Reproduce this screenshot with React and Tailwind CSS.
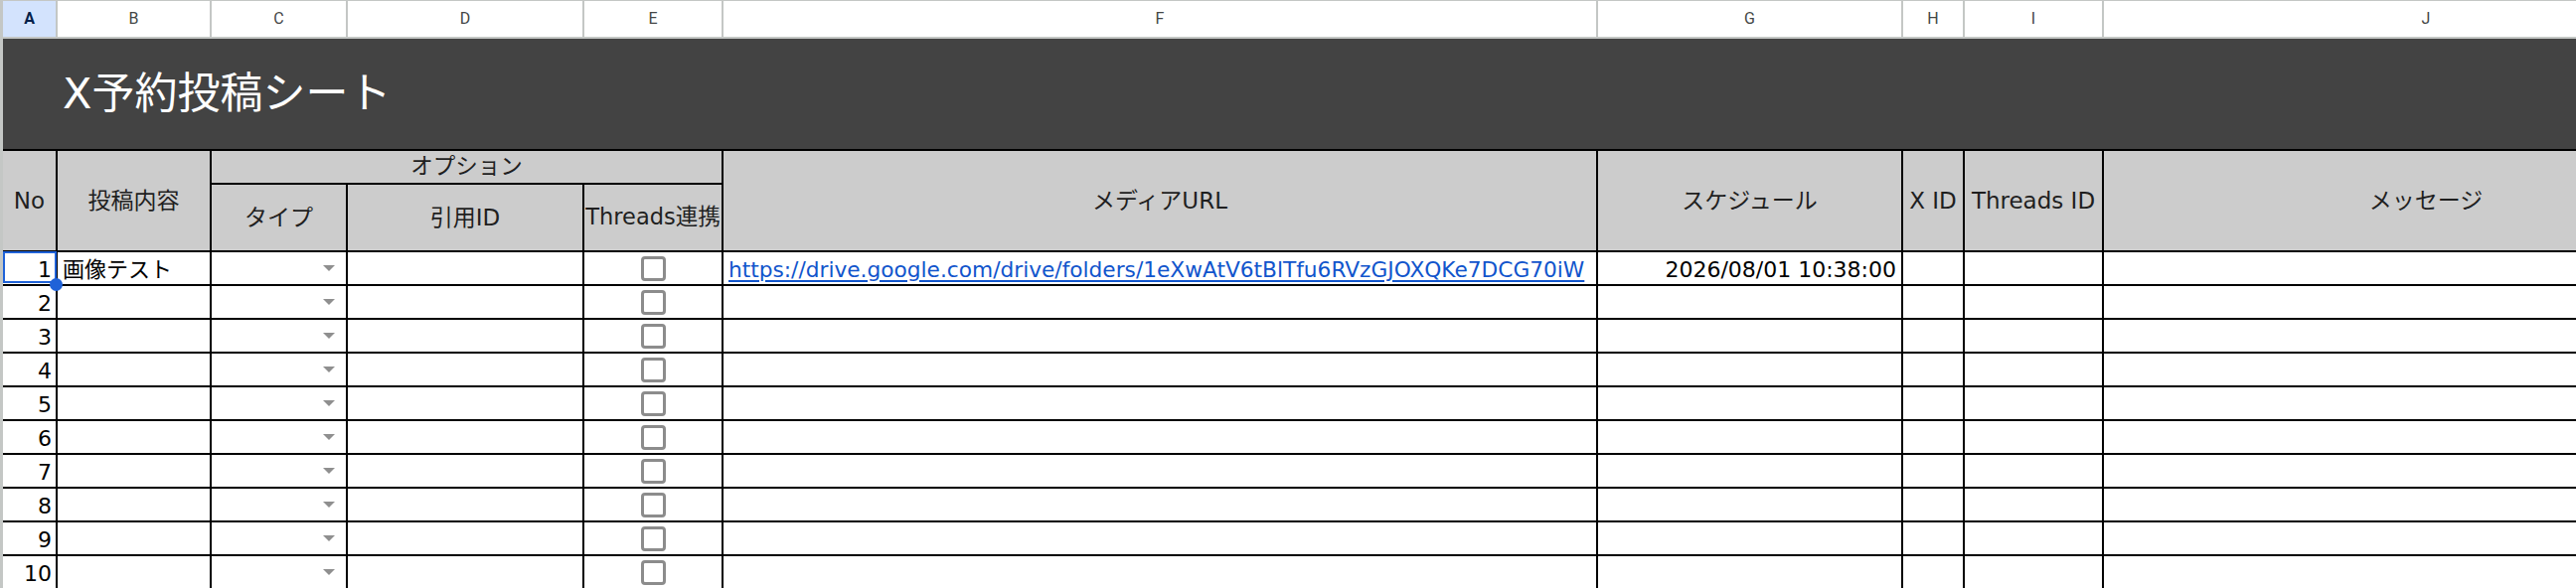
import React from "react";

const COLS = "grid-cols-[53px_153px_135px_236px_138px_878px_305px_60px_138px_648px]";
const FONT = { fontFamily: '"DejaVu Sans", "Noto Sans CJK JP", sans-serif' };

function Arrow() {
  return (
    <svg width="12" height="6" viewBox="0 0 12 6" className="shrink-0">
      <polygon points="0,0 12,0 6,6" fill="#8f8f8f" />
    </svg>
  );
}

function Checkbox() {
  return <div className="w-[25px] h-[25px] border-[3px] border-[#8c8c8c] rounded-[4px] bg-white" />;
}

const letters = ["A", "B", "C", "D", "E", "F", "G", "H", "I", "J"];

export default function App() {
  const rows = Array.from({ length: 10 }, (_, i) => i + 1);
  return (
    <div className="w-[2592px] h-[592px] overflow-hidden flex bg-white" style={FONT}>
      <div className="w-[3px] shrink-0 bg-[#c4c7c5]" />
      <div className="w-[2764px] shrink-0 flex flex-col">
        {/* column letters */}
        <div
          className={`grid ${COLS} gap-x-[2px] bg-[#c4c7c5] pt-[1px] pb-[2px] h-[39px] shrink-0`}
          style={{ fontFamily: 'Roboto, "Liberation Sans", sans-serif' }}
        >
          {letters.map((l) => (
            <div
              key={l}
              className={
                l === "A"
                  ? "bg-[#d3e3fd] text-[#041e49] font-bold text-[16px] flex items-center justify-center"
                  : "bg-white text-[#444746] text-[16px] flex items-center justify-center"
              }
            >
              {l}
            </div>
          ))}
        </div>
        {/* title */}
        <div className="h-[111px] shrink-0 bg-[#434343] flex items-center pl-[60px]">
          <span className="text-white text-[43px] leading-none">X予約投稿シート</span>
        </div>
        {/* table */}
        <div
          className={`grid ${COLS} grid-rows-[32px_66px_repeat(10,32px)] gap-[2px] bg-black pt-[2px] text-[#1f1f1f]`}
        >
          <div className="row-span-2 bg-[#cccccc] flex items-center justify-center text-[23px]">No</div>
          <div className="row-span-2 bg-[#cccccc] flex items-center justify-center text-[23px]">投稿内容</div>
          <div className="col-span-3 bg-[#cccccc] flex items-center justify-center text-[22.5px]">オプション</div>
          <div className="row-span-2 bg-[#cccccc] flex items-center justify-center text-[23px]">メディアURL</div>
          <div className="row-span-2 bg-[#cccccc] flex items-center justify-center text-[23px]">スケジュール</div>
          <div className="row-span-2 bg-[#cccccc] flex items-center justify-center text-[23px] whitespace-nowrap overflow-hidden">X ID</div>
          <div className="row-span-2 bg-[#cccccc] flex items-center justify-center text-[23px] whitespace-nowrap overflow-hidden">Threads ID</div>
          <div className="row-span-2 bg-[#cccccc] flex items-center justify-center text-[23px]">メッセージ</div>
          <div className="bg-[#cccccc] flex items-center justify-center text-[23px]">タイプ</div>
          <div className="bg-[#cccccc] flex items-center justify-center text-[23px]">引用ID</div>
          <div className="bg-[#cccccc] flex items-center justify-center text-[22.5px] whitespace-nowrap overflow-hidden">Threads連携</div>

          {rows.map((n) => (
            <React.Fragment key={n}>
              <div className="relative bg-white flex items-end justify-end pr-[4px] pb-[1px] text-[22px] leading-[26px] text-black">
                {n}
                {n === 1 && (
                  <>
                    <div className="absolute top-[-1px] left-0 right-[-1px] bottom-[1px] border-2 border-[#1f62d8]" />
                    <div className="absolute left-[47px] top-[26px] w-[13px] h-[13px] rounded-full bg-[#1f62d8] z-10" />
                  </>
                )}
              </div>
              <div className="bg-white flex items-end pl-[5px] pb-[1px] text-[22px] leading-[26px] text-black whitespace-nowrap overflow-hidden">
                {n === 1 ? "画像テスト" : ""}
              </div>
              <div className="bg-white flex items-center justify-end pr-[11px]">
                <Arrow />
              </div>
              <div className="bg-white" />
              <div className="bg-white flex items-center justify-center">
                <Checkbox />
              </div>
              <div className="bg-white flex items-end pl-[5px] pb-[1px] text-[21.7px] leading-[26px] whitespace-nowrap overflow-hidden">
                {n === 1 ? (
                  <span className="text-[#1155cc] underline underline-offset-[3px]">
                    https://drive.google.com/drive/folders/1eXwAtV6tBlTfu6RVzGJOXQKe7DCG70iW
                  </span>
                ) : null}
              </div>
              <div className="bg-white flex items-end justify-end pr-[5px] pb-[1px] text-[22px] leading-[26px] text-black whitespace-nowrap overflow-hidden">
                {n === 1 ? "2026/08/01 10:38:00" : ""}
              </div>
              <div className="bg-white" />
              <div className="bg-white" />
              <div className="bg-white" />
            </React.Fragment>
          ))}
        </div>
      </div>
    </div>
  );
}
